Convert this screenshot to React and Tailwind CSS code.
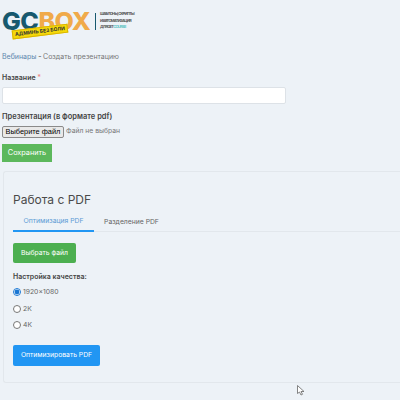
export default function App() {
    const qualities = [
        { id: 'fhd', label: '1920×1080', checked: true },
        { id: '2k', label: '2K', checked: false },
        { id: '4k', label: '4K', checked: false }
    ];

    return (
        <div className="relative h-[400px] w-[400px] overflow-hidden bg-[#edf2f7] font-['Inter',sans-serif] text-[#444]">
            <div className="px-[2px] pt-[9px]">
                {/* logo */}
                <div className="flex h-[24px] items-center">
                    <div className="relative flex h-[24px] w-[91px] items-center text-[25px] font-extrabold leading-none tracking-[-0.5px]">
                        <span className="text-[#17596e]">GC</span>
                        <span className="text-[#f0aa4a]">BOX</span>
                        <span className="absolute left-[10px] top-[18px] -rotate-[7deg] whitespace-nowrap border border-[#d9b400] bg-[#f5d90a] px-[2px] text-[5px] font-bold leading-[7px] tracking-normal text-[#333]">
                            АДМИНЬ БЕЗ БОЛИ
                        </span>
                    </div>
                    <div className="ml-[2px] h-[17px] w-px bg-[#17596e]" />
                    <div className="ml-[4px] text-[4px] font-bold leading-[6.5px] tracking-[-0.7px] text-[#555]">
                        <div>ШАБЛОНЫ, СКРИПТЫ</div>
                        <div>И АВТОМАТИЗАЦИЯ</div>
                        <div>ДЛЯ GET<span className="text-[#5cc4c4]">COURSE</span></div>
                    </div>
                </div>

                <div className="mt-[18px] text-[7px] leading-[12px] text-[#777]">
                    <span className="text-[#5d87ad]">Вебинары</span>
                    <span className="font-bold"> - </span> Создать презентацию
                </div>

                <div className="mt-[9px] text-[7px] font-semibold leading-[12px] text-[#444]">
                    Название <span className="text-[#e88]">*</span>
                </div>
                <input className="mt-[3px] block h-[17px] w-[284px] rounded-[2px] border border-[#dde2e7] bg-white" />

                <div className="mt-[7px] text-[7.5px] font-semibold leading-[12px] text-[#444]">Презентация (в формате pdf)</div>
                <div className="mt-[2px] flex h-[13px] items-center">
                    <button className="h-[12px] w-[62px] whitespace-nowrap rounded-[2px] border border-[#8a8a8a] bg-[#e9e9e9] font-['Liberation_Sans',sans-serif] text-[7.4px] leading-none text-black">
                        Выберите файл
                    </button>
                    <span className="ml-[2px] whitespace-nowrap text-[6.8px] text-[#777]">Файл не выбран</span>
                </div>
                <button className="mt-[6px] block h-[18px] w-[50px] whitespace-nowrap bg-[#5cb85c] text-[7.3px] text-white">Сохранить</button>
            </div>

            <div className="ml-[3px] mt-[9px] h-[212px] rounded-tl-[3px] rounded-bl-[3px] border border-r-0 border-[#e2e7ec] pl-[9px] pt-[18px]">
                <h2 className="text-[12px] leading-[20px] text-[#4a4a4a]">Работа с PDF</h2>
                <div className="mt-[3px] flex h-[19px] border-b border-[#e2e7ec]">
                    <div className="-mb-px flex w-[81px] items-center justify-center border-b-2 border-[#2196f3] text-[6.8px] text-[#5b9bd5]">
                        Оптимизация PDF
                    </div>
                    <div className="flex w-[75px] items-center justify-center text-[6.8px] text-[#666]">Разделение PDF</div>
                </div>
                <button className="mt-[11px] block h-[20px] w-[63px] whitespace-nowrap rounded-[2px] bg-[#4caf50] text-[6.8px] text-white">Выбрать файл</button>

                <div className="mt-[8px] text-[7px] font-semibold leading-[12px] text-[#444]">Настройка качества:</div>
                <div className="mt-[3px] flex flex-col gap-[4px]">
                    {qualities.map((quality) => (
                        <label key={quality.id} className="flex h-[12.5px] items-center gap-[2px] text-[6.8px] text-[#666]">
                            <input
                                type="radio"
                                name="quality"
                                defaultChecked={quality.checked}
                                className="m-0 h-[8px] w-[8px] accent-[#1976d2]"
                            />
                            {quality.label}
                        </label>
                    ))}
                </div>
                <button className="mt-[13px] block h-[21px] w-[87px] whitespace-nowrap rounded-[2px] bg-[#2196f3] text-[6.8px] text-white">Оптимизировать PDF</button>
            </div>

            {/* mouse pointer */}
            <svg className="absolute left-[297px] top-[385px]" width="8" height="11" viewBox="0 0 8 11">
                <path d="M0.5 0.5 L0.5 8.5 L2.5 7 L4 10 L5.5 9.3 L4 6.5 L7 6.5 Z" fill="#fff" stroke="#666" strokeWidth="0.8" />
            </svg>
        </div>
    );
}
